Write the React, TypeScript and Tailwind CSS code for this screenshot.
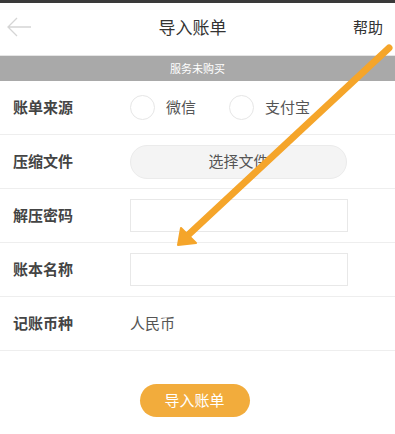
import { useState } from 'react'

const font = { fontFamily: '"Noto Sans CJK SC", "Noto Sans", sans-serif' }

function Row({ label, children }: { label: string; children: React.ReactNode }) {
  return (
    <div className="flex h-[54px] items-center border-b border-[#eeeeee]">
      <div className="w-[130px] pl-[13px] text-[15px] font-semibold text-[#444]">{label}</div>
      <div className="flex flex-1 items-center">{children}</div>
    </div>
  )
}

function Radio({ label }: { label: string }) {
  return (
    <label className="flex items-center">
      <span className="h-[25px] w-[25px] rounded-full border border-[#e6e6e6]" />
      <span className="ml-[11px] text-[15px] text-[#555]">{label}</span>
    </label>
  )
}

export default function App() {
  const [pwd, setPwd] = useState('')
  const [name, setName] = useState('')

  return (
    <div className="relative h-[434px] w-[395px] overflow-hidden bg-white" style={font}>
      <div className="h-[3px] bg-[#3a3a3a]" />
      <div className="flex h-[53px] items-center justify-between border-b border-[#e5e5e5] px-[6px]">
        <svg width="26" height="22" viewBox="0 0 26 22" className="mt-[-4px]">
          <path d="M25 11H2M11 2L2 11l9 9" fill="none" stroke="#d5d5d5" strokeWidth="1.3" />
        </svg>
        <div className="mt-[-4px] text-[17px] text-[#333]">导入账单</div>
        <div className="mt-[-4px] pr-[6px] text-[15px] text-[#333]">帮助</div>
      </div>
      <div className="flex h-[25px] items-center justify-center bg-[#a9a9a9] text-[11px] text-white">服务未购买</div>

      <Row label="账单来源">
        <Radio label="微信" />
        <div className="w-[33px]" />
        <Radio label="支付宝" />
      </Row>
      <Row label="压缩文件">
        <button className="h-[34px] w-[217px] rounded-full border border-[#ebebeb] bg-[#f4f4f4] text-[15px] text-[#555]">
          选择文件
        </button>
      </Row>
      <Row label="解压密码">
        <input
          value={pwd}
          onChange={(e) => setPwd(e.target.value)}
          className="h-[33px] w-[218px] border border-[#e8e8e8] px-2 text-sm outline-none"
        />
      </Row>
      <Row label="账本名称">
        <input
          value={name}
          onChange={(e) => setName(e.target.value)}
          className="h-[33px] w-[218px] border border-[#e8e8e8] px-2 text-sm outline-none"
        />
      </Row>
      <Row label="记账币种">
        <span className="text-[15px] text-[#555]">人民币</span>
      </Row>

      <div className="flex justify-center pt-[33px]">
        <button className="ml-[-6px] h-[33px] w-[110px] rounded-full bg-[#f2ac3c] text-[15px] text-white">导入账单</button>
      </div>

      {/* annotation arrow */}
      <svg className="pointer-events-none absolute inset-0" width="395" height="434">
        <line x1="389" y1="48" x2="186" y2="237" stroke="#f5a52a" strokeWidth="7" strokeLinecap="round" />
        <polygon points="178,245 181,228 196,243" fill="#f5a52a" stroke="#f5a52a" strokeWidth="2" strokeLinejoin="round" />
      </svg>
    </div>
  )
}
